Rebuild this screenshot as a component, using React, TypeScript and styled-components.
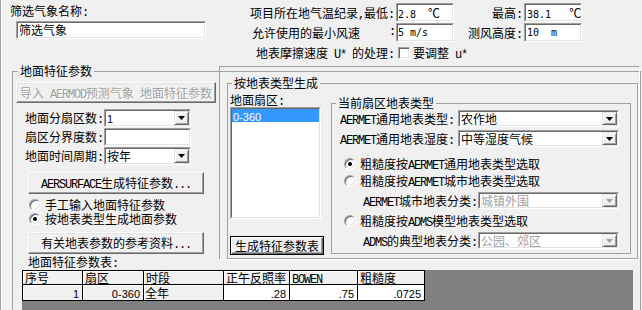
import * as React from 'react';
import styled, {createGlobalStyle, css} from 'styled-components';

const GlobalStyle = createGlobalStyle`
    html, body {
        margin: 0;
        padding: 0;
        background: #f0f0f0;
    }
    body {
        font-family: "Noto Sans CJK SC", "Noto Sans", sans-serif;
        font-size: 12px;
        line-height: 14px;
        color: #000;
    }
`;

// half-width latin, like the SimSun latin glyphs (6px per char)
const Lat = styled.span`
    font-family: "Liberation Mono", monospace;
    font-size: 12px;
    letter-spacing: -1.2px;
    line-height: 9px;
    white-space: pre;
`;

const Num = styled.span`
    font-family: "Liberation Sans", Arial, sans-serif;
    font-size: 11px;
    line-height: 9px;
`;

const Mono = styled.span`
    font-family: "DejaVu Sans Mono", monospace;
    font-size: 10px;
    line-height: 9px;
    white-space: pre;
`;

function Mix({text}: {text: string}) {
    const parts = text.split(/([\x20-\x7e]+)/);
    return (
        <span>
            {parts.map((p, i) =>
                p === '' ? null : /^[\x20-\x7e]+$/.test(p) ? (
                    <Lat key={i}>{p}</Lat>
                ) : (
                    <React.Fragment key={i}>{p}</React.Fragment>
                ),
            )}
        </span>
    );
}

const Window = styled.div`
    width: 642px;
    height: 310px;
    overflow: hidden;
    box-sizing: border-box;
    border-left: 1px solid #a0a0a0;
    box-shadow: inset 1px 0 0 #fff;
`;

const TopBar = styled.div`
    display: flex;
    height: 64px;
`;

const NameBlock = styled.div`
    flex: 0 0 251px;
    box-sizing: border-box;
    padding: 4px 0 0 9px;
`;

const Sunken = styled.div<{$w: number; $h: number}>`
    box-sizing: border-box;
    width: ${p => p.$w}px;
    height: ${p => p.$h}px;
    border: 1px solid;
    border-color: #a0a0a0 #fff #fff #a0a0a0;
    background: #fff;
`;

const SunkenInner = styled.div<{$pad?: number}>`
    box-sizing: border-box;
    height: 100%;
    border: 1px solid;
    border-color: #696969 #e3e3e3 #e3e3e3 #696969;
    display: flex;
    align-items: center;
    white-space: nowrap;
    padding-left: ${p => p.$pad ?? 0}px;
`;

const NameField = styled(Sunken)`
    margin: 3px 0 0 6px;
`;

const ParamGrid = styled.div`
    display: grid;
    grid-template-columns: 144px 58px 70px 58px;
    grid-template-rows: 19px 19px 20px;
    row-gap: 1px;
    padding-top: 3px;
`;

const GridLabel = styled.div<{$split?: boolean}>`
    display: flex;
    align-items: center;
    justify-content: ${p => (p.$split ? 'space-between' : 'flex-end')};
    padding-right: ${p => (p.$split ? 1 : 2)}px;
    white-space: nowrap;
`;

const CheckCell = styled.div`
    grid-column: 2 / span 3;
    display: flex;
    align-items: center;
    padding-left: 2px;
`;

const CheckBox = styled.span`
    box-sizing: border-box;
    width: 12px;
    height: 12px;
    margin-right: 3px;
    border: 1px solid;
    border-color: #a0a0a0 #fff #fff #a0a0a0;
    box-shadow: inset 1px 1px 0 #696969, inset -1px -1px 0 #e3e3e3;
    background: #fff;
`;

const Group = styled.fieldset<{$w?: number; $h: number}>`
    margin: 0;
    padding: 0;
    min-width: 0;
    box-sizing: border-box;
    ${p => p.$w && css`width: ${p.$w}px;`}
    height: ${p => p.$h}px;
    border: 1px solid #a0a0a0;
`;

const GroupTitle = styled.legend<{$indent: number}>`
    margin-left: ${p => p.$indent}px;
    padding: 0 2px;
    line-height: 14px;
    white-space: nowrap;
`;

const MainGroup = styled(Group)`
    margin-left: 11px;
`;

const MainRow = styled.div`
    display: flex;
    height: 182px;
`;

const LeftCol = styled.div`
    flex: 0 0 206px;
    display: flex;
    flex-direction: column;
    align-items: flex-start;
`;

const Button = styled.div<{$w: number; $h: number; $default?: boolean; $disabled?: boolean}>`
    box-sizing: border-box;
    width: ${p => p.$w}px;
    height: ${p => p.$h}px;
    display: flex;
    align-items: center;
    justify-content: center;
    white-space: nowrap;
    background: #f0f0f0;
    border: 1px solid;
    border-color: #fff #696969 #696969 #fff;
    box-shadow: inset -1px -1px 0 #a0a0a0, inset 1px 1px 0 #e3e3e3;
    ${p =>
        p.$default &&
        css`
            border-color: #000;
            box-shadow: inset 1px 1px 0 #fff, inset -1px -1px 0 #696969, inset -2px -2px 0 #a0a0a0;
        `}
    ${p =>
        p.$disabled &&
        css`
            color: #a0a0a0;
            text-shadow: 1px 1px 0 #fff;
        `}
`;

const ImportButton = styled(Button)`
    margin: 4px 0 0 3px;
`;

const WideButton = styled(Button)<{$top: number}>`
    margin: ${p => p.$top}px 0 0 15px;
`;

const FormGrid = styled.div`
    margin-top: 6px;
    display: grid;
    grid-template-columns: 91px 87px;
    grid-auto-rows: 18px;
    row-gap: 1px;
`;

const FormLabel = styled.div`
    display: flex;
    align-items: center;
    justify-content: flex-end;
    padding-right: 1px;
    white-space: nowrap;
`;

const RadioRow = styled.div<{$top: number; $left: number}>`
    display: flex;
    align-items: center;
    height: 14px;
    margin-top: ${p => p.$top}px;
    padding-left: ${p => p.$left}px;
    white-space: nowrap;
`;

const RadioDot = styled.span<{$on?: boolean}>`
    box-sizing: border-box;
    flex: 0 0 12px;
    width: 12px;
    height: 12px;
    margin-right: 4px;
    border-radius: 50%;
    border: 1px solid;
    border-color: #a0a0a0 #fff #fff #a0a0a0;
    box-shadow: inset 1px 1px 0 #696969, inset -1px -1px 0 #e3e3e3;
    background: #fff;
    display: flex;
    align-items: center;
    justify-content: center;
    &::after {
        content: '';
        width: 4px;
        height: 4px;
        border-radius: 50%;
        background: ${p => (p.$on ? '#000' : 'transparent')};
    }
`;

const DropButton = styled.span`
    box-sizing: border-box;
    flex: 0 0 15px;
    height: 100%;
    display: flex;
    align-items: center;
    justify-content: center;
    background: #f0f0f0;
    border: 1px solid;
    border-color: #e3e3e3 #696969 #696969 #e3e3e3;
    box-shadow: inset 1px 1px 0 #fff, inset -1px -1px 0 #a0a0a0;
`;

const ComboText = styled.span<{$disabled?: boolean}>`
    flex: 1;
    padding-left: 1px;
    color: ${p => (p.$disabled ? '#a0a0a0' : '#000')};
`;

function Combo({
    w,
    h,
    disabled,
    children,
}: {
    w: number;
    h: number;
    disabled?: boolean;
    children: React.ReactNode;
}) {
    return (
        <Sunken $w={w} $h={h}>
            <SunkenInner>
                <ComboText $disabled={disabled}>{children}</ComboText>
                <DropButton>
                    <svg width="7" height="4" viewBox="0 0 7 4">
                        <polygon points="0,0 7,0 3.5,4" fill={disabled ? '#a0a0a0' : '#000'} />
                    </svg>
                </DropButton>
            </SunkenInner>
        </Sunken>
    );
}

const TypePanel = styled.div`
    flex: 1;
    align-self: flex-start;
    margin-top: -12px;
    height: 194px;
    box-sizing: border-box;
    border: 1px solid;
    border-color: #a0a0a0 #fff #fff #a0a0a0;
    padding: 9px 1px 0 7px;
`;

const TypeRow = styled.div`
    display: flex;
    align-items: flex-start;
`;

const SectorCol = styled.div`
    flex: 0 0 94px;
    padding-left: 2px;
    display: flex;
    flex-direction: column;
`;

const SectorLabel = styled.div`
    margin-top: 3px;
`;

const ListItem = styled.div<{$selected?: boolean}>`
    height: 13px;
    line-height: 13px;
    padding-left: 1px;
    align-self: stretch;
    background: ${p => (p.$selected ? '#3399ff' : 'transparent')};
    color: ${p => (p.$selected ? '#fff' : '#000')};
`;

const ListInner = styled(SunkenInner)`
    flex-direction: column;
    align-items: stretch;
`;

const MakeButton = styled(Button)`
    margin-top: 17px;
`;

const SurfaceGroup = styled(Group)`
    margin: 6px 0 0 7px;
`;

const FieldRow = styled.div<{$top: number; $left: number; $label: number}>`
    display: flex;
    align-items: center;
    margin-top: ${p => p.$top}px;
    padding-left: ${p => p.$left}px;
    & > :first-child {
        flex: 0 0 ${p => p.$label}px;
        white-space: nowrap;
    }
`;

const TableCaption = styled.div`
    margin-top: -5px;
    padding-left: 15px;
    height: 15px;
`;

const TableArea = styled.div`
    margin-left: 9px;
    width: 611px;
    height: 60px;
    background: #808080;
`;

const Grid = styled.div`
    display: inline-grid;
    grid-template-columns: 59px 60px 79px 65px 67px 66px;
    grid-template-rows: 13px 15px;
    gap: 1px;
    border: 1px solid #000;
    background: #000;
`;

const HeadCell = styled.div`
    background: #f0f0f0;
    box-shadow: inset 1px 1px 0 #fff;
    padding-left: 2px;
    line-height: 13px;
    white-space: nowrap;
`;

const BodyCell = styled.div<{$fixed?: boolean; $left?: boolean}>`
    background: ${p => (p.$fixed ? '#f0f0f0' : '#fff')};
    box-shadow: ${p => (p.$fixed ? 'inset 1px 1px 0 #fff' : 'none')};
    line-height: 15px;
    text-align: ${p => (p.$left ? 'left' : 'right')};
    padding: ${p => (p.$left ? '0 0 0 1px' : '0 3px 0 0')};
    white-space: nowrap;
`;

const headers = ['序号', '扇区', '时段', '正午反照率', 'BOWEN', '粗糙度'];

export default function App() {
    return (
        <Window>
            <GlobalStyle />
            <TopBar>
                <NameBlock>
                    <div>
                        <Mix text="筛选气象名称:" />
                    </div>
                    <NameField $w={190} $h={18}>
                        <SunkenInner $pad={1}>筛选气象</SunkenInner>
                    </NameField>
                </NameBlock>
                <ParamGrid>
                    <GridLabel>
                        <Mix text="项目所在地气温纪录,最低:" />
                    </GridLabel>
                    <Sunken $w={58} $h={19}>
                        <SunkenInner $pad={0}>
                            <span>
                                <Mono>2.8  </Mono>℃
                            </span>
                        </SunkenInner>
                    </Sunken>
                    <GridLabel>
                        <Mix text="最高:" />
                    </GridLabel>
                    <Sunken $w={58} $h={19}>
                        <SunkenInner $pad={1}>
                            <span>
                                <Mono>38.1   </Mono>℃
                            </span>
                        </SunkenInner>
                    </Sunken>

                    <GridLabel $split>
                        <span>允许使用的最小风速</span>
                        <Lat>:</Lat>
                    </GridLabel>
                    <Sunken $w={58} $h={19}>
                        <SunkenInner $pad={0}>
                            <Mono>5 m/s</Mono>
                        </SunkenInner>
                    </Sunken>
                    <GridLabel>
                        <Mix text="测风高度:" />
                    </GridLabel>
                    <Sunken $w={58} $h={19}>
                        <SunkenInner $pad={1}>
                            <Mono>10  m</Mono>
                        </SunkenInner>
                    </Sunken>

                    <GridLabel>
                        <Mix text="地表摩擦速度 U* 的处理:" />
                    </GridLabel>
                    <CheckCell>
                        <CheckBox />
                        <Mix text="要调整 u*" />
                    </CheckCell>
                </ParamGrid>
            </TopBar>

            <MainGroup $w={629} $h={300}>
                <GroupTitle $indent={5}>地面特征参数</GroupTitle>
                <MainRow>
                    <LeftCol>
                        <ImportButton $w={200} $h={21} $disabled>
                            <Mix text="导入 AERMOD预测气象 地面特征参数" />
                        </ImportButton>
                        <FormGrid>
                            <FormLabel>
                                <Mix text="地面分扇区数:" />
                            </FormLabel>
                            <Combo w={87} h={18}>
                                <Num>1</Num>
                            </Combo>
                            <FormLabel>
                                <Mix text="扇区分界度数:" />
                            </FormLabel>
                            <Sunken $w={87} $h={18}>
                                <SunkenInner />
                            </Sunken>
                            <FormLabel>
                                <Mix text="地面时间周期:" />
                            </FormLabel>
                            <Combo w={87} h={18}>
                                按年
                            </Combo>
                        </FormGrid>
                        <WideButton $w={176} $h={22} $top={7}>
                            <Mix text="AERSURFACE生成特征参数..." />
                        </WideButton>
                        <RadioRow $top={4} $left={16}>
                            <RadioDot />
                            <span>手工输入地面特征参数</span>
                        </RadioRow>
                        <RadioRow $top={0} $left={16}>
                            <RadioDot $on />
                            <span>按地表类型生成地面参数</span>
                        </RadioRow>
                        <WideButton $w={176} $h={22} $top={6}>
                            <Mix text="有关地表参数的参考资料..." />
                        </WideButton>
                    </LeftCol>

                    <TypePanel>
                        <Group $h={183}>
                            <GroupTitle $indent={4}>按地表类型生成</GroupTitle>
                            <TypeRow>
                                <SectorCol>
                                    <SectorLabel>
                                        <Mix text="地面扇区:" />
                                    </SectorLabel>
                                    <Sunken $w={91} $h={112}>
                                        <ListInner>
                                            <ListItem $selected>
                                                <Num>0-360</Num>
                                            </ListItem>
                                        </ListInner>
                                    </Sunken>
                                    <MakeButton $w={94} $h={19} $default>
                                        <span>生成特征参数表</span>
                                    </MakeButton>
                                </SectorCol>
                                <SurfaceGroup $w={300} $h={158}>
                                    <GroupTitle $indent={4}>当前扇区地表类型</GroupTitle>
                                    <FieldRow $top={0} $left={8} $label={118}>
                                        <Mix text="AERMET通用地表类型:" />
                                        <Combo w={161} h={17}>
                                            农作地
                                        </Combo>
                                    </FieldRow>
                                    <FieldRow $top={3} $left={8} $label={118}>
                                        <Mix text="AERMET通用地表湿度:" />
                                        <Combo w={161} h={17}>
                                            中等湿度气候
                                        </Combo>
                                    </FieldRow>
                                    <RadioRow $top={10} $left={12}>
                                        <RadioDot $on />
                                        <Mix text="粗糙度按AERMET通用地表类型选取" />
                                    </RadioRow>
                                    <RadioRow $top={3} $left={12}>
                                        <RadioDot />
                                        <Mix text="粗糙度按AERMET城市地表类型选取" />
                                    </RadioRow>
                                    <FieldRow $top={4} $left={31} $label={115}>
                                        <Mix text="AERMET城市地表分类:" />
                                        <Combo w={141} h={17} disabled>
                                            城镇外围
                                        </Combo>
                                    </FieldRow>
                                    <RadioRow $top={5} $left={12}>
                                        <RadioDot />
                                        <Mix text="粗糙度按ADMS模型地表类型选取" />
                                    </RadioRow>
                                    <FieldRow $top={4} $left={31} $label={115}>
                                        <Mix text="ADMS的典型地表分类:" />
                                        <Combo w={141} h={17} disabled>
                                            公园、郊区
                                        </Combo>
                                    </FieldRow>
                                </SurfaceGroup>
                            </TypeRow>
                        </Group>
                    </TypePanel>
                </MainRow>

                <TableCaption>
                    <Mix text="地面特征参数表:" />
                </TableCaption>
                <TableArea>
                    <Grid>
                        {headers.map(h => (
                            <HeadCell key={h}>
                                <Mix text={h} />
                            </HeadCell>
                        ))}
                        <BodyCell $fixed>
                            <Num>1</Num>
                        </BodyCell>
                        <BodyCell $fixed>
                            <Num>0-360</Num>
                        </BodyCell>
                        <BodyCell $fixed $left>
                            全年
                        </BodyCell>
                        <BodyCell>
                            <Num>.28</Num>
                        </BodyCell>
                        <BodyCell>
                            <Num>.75</Num>
                        </BodyCell>
                        <BodyCell>
                            <Num>.0725</Num>
                        </BodyCell>
                    </Grid>
                </TableArea>
            </MainGroup>
        </Window>
    );
}
